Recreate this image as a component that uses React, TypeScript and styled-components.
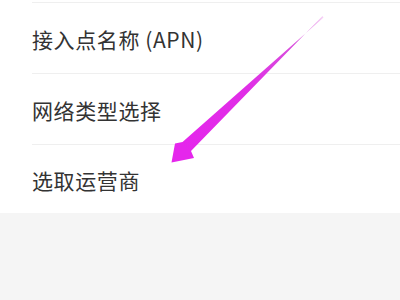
import React from 'react';
import styled, { createGlobalStyle } from 'styled-components';

const GlobalStyle = createGlobalStyle`
  html, body {
    margin: 0;
    padding: 0;
    background: #f5f5f5;
  }
`;

const Screen = styled.div`
  position: relative;
  width: 400px;
  height: 300px;
  overflow: hidden;
  background: #f5f5f5;
  font-family: "Noto Sans CJK SC", "Noto Sans", sans-serif;
`;

const List = styled.div`
  background: #ffffff;
  padding-top: 2px;
`;

const Row = styled.div<{ $height: number }>`
  height: ${(p) => p.$height}px;
  margin-left: 32px;
  border-top: 1px solid #efefef;
  display: flex;
  align-items: center;
  padding-top: 2px;
  box-sizing: border-box;
  font-size: 21px;
  font-weight: 400;
  color: #333333;
  letter-spacing: 0.6px;
`;

const Arrow = styled.svg`
  position: absolute;
  left: 0;
  top: 0;
  width: 400px;
  height: 300px;
  pointer-events: none;
`;

const items = [
  { label: '接入点名称 (APN)', height: 71 },
  { label: '网络类型选择', height: 71 },
  { label: '选取运营商', height: 69 },
];

export default function App() {
  return (
    <Screen>
      <GlobalStyle />
      <List>
        {items.map((item) => (
          <Row key={item.label} $height={item.height}>
            {item.label}
          </Row>
        ))}
      </List>
      <Arrow viewBox="0 0 400 300">
        <defs>
          <linearGradient id="shaft" x1="323" y1="17" x2="185" y2="148" gradientUnits="userSpaceOnUse">
            <stop offset="0" stopColor="#f6d2f6" />
            <stop offset="0.2" stopColor="#d84fdc" />
            <stop offset="0.55" stopColor="#e02ee6" />
            <stop offset="1" stopColor="#e526ec" />
          </linearGradient>
        </defs>
        <polygon
          points="322.5,16 191,151 194,158 171.5,162.5 175,143.5 182.5,142 323.5,17.5"
          fill="url(#shaft)"
        />
      </Arrow>
    </Screen>
  );
}
